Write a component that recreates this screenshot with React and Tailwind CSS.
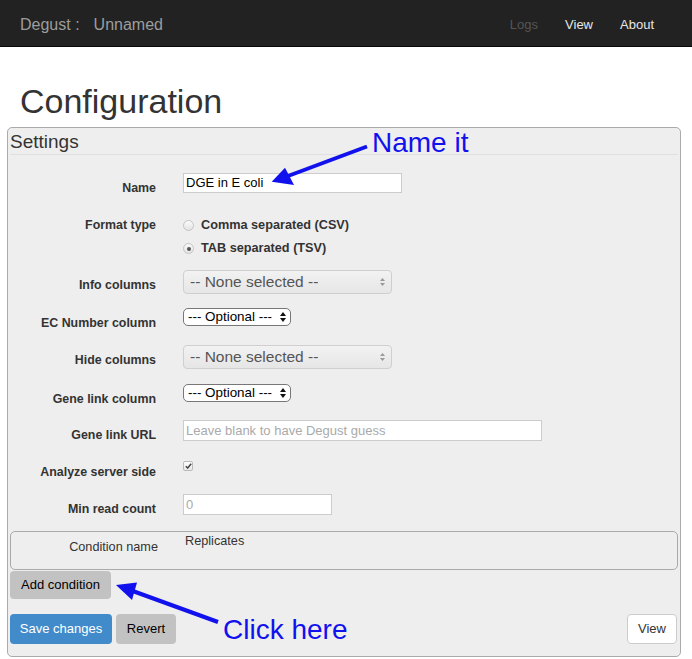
const BLUE = "#1111ee";

const Label = ({ children, pt = "pt-[8px]" }) => (
  <div className={`w-[146px] shrink-0 text-right text-[12.4px] font-bold leading-[15px] text-[#333] ${pt}`}>
    {children}
  </div>
);

const Row = ({ label, h, children, labelPt }) => (
  <div className={`flex items-start ${h}`}>
    <Label pt={labelPt}>{label}</Label>
    <div className="ml-[27px]">{children}</div>
  </div>
);

const WideSelect = () => (
  <div className="flex h-[24px] w-[209px] items-center justify-between rounded-[4px] border border-[#cfcfcf] bg-gradient-to-b from-[#f2f2f2] to-[#e6e6e6] pl-[6px] pr-[6px]">
    <span className="text-[15.5px] leading-none text-[#555]">-- None selected --</span>
    <svg width="5" height="8" viewBox="0 0 5 8">
      <path d="M2.5 0L5 3H0z M2.5 8L0 5h5z" fill="#999" />
    </svg>
  </div>
);

const SmallSelect = () => (
  <div className="flex h-[18px] w-[108px] items-center justify-between rounded-[5px] border border-[#777] bg-white pl-[4px] pr-[4px]">
    <span className="text-[13.4px] leading-none text-black">--- Optional ---</span>
    <svg width="6" height="10" viewBox="0 0 6 10">
      <path d="M3 0L6 4H0z M3 10L0 6h6z" fill="#111" />
    </svg>
  </div>
);

const Radio = ({ checked }) => (
  <span className="flex h-[11px] w-[11px] items-center justify-center rounded-full border border-[#c4c4c4] bg-gradient-to-b from-[#fafafa] to-[#e4e4e4]">
    {checked && <span className="h-[4px] w-[4px] rounded-full bg-[#555]" />}
  </span>
);

const Btn = ({ className, children }) => (
  <button className={`flex items-center justify-center rounded-[4px] text-[13px] ${className}`}>
    {children}
  </button>
);

export default function App() {
  return (
    <div className="relative h-[659px] w-[692px] overflow-hidden bg-white font-['Liberation_Sans',Arial,sans-serif]">
      {/* Navbar */}
      <div className="flex h-[47px] items-center border-b border-[#080808] bg-[#222] pl-[20px] pr-[38px] pt-[3px]">
        <span className="text-[16px] text-[#9d9d9d]">Degust :</span>
        <span className="ml-[14px] text-[16px] text-[#9d9d9d]">Unnamed</span>
        <div className="ml-auto flex gap-[27px] text-[13px]">
          <span className="text-[#555]">Logs</span>
          <span className="text-[#e6e6e6]">View</span>
          <span className="text-[#e6e6e6]">About</span>
        </div>
      </div>

      <h1 className="ml-[20px] mt-[34px] mb-[6px] text-[34px] font-medium leading-[40px] text-[#333]">
        Configuration
      </h1>

      {/* Settings panel */}
      <div className="ml-[7px] w-[674px] rounded-[5px] border border-[#aaa] bg-[#eee] px-[2px] pb-[12px]">
        <div className="h-[27px] border-b border-[#e0e0e0] pt-[1px] text-[19px] leading-[26px] text-[#333]">
          Settings
        </div>

        <div className="mt-[18px]">
          <Row label="Name" h="h-[37px]">
            <div className="flex h-[20px] w-[219px] items-center border border-[#ccc] bg-white px-[2px] text-[13px] text-black">
              DGE in E coli
            </div>
          </Row>

          <Row label="Format type" h="h-[60px]">
            <div className="pt-[4px] text-[12.7px] font-bold text-[#333]">
              <div className="flex h-[23px] items-center">
                <Radio />
                <span className="ml-[7px]">Comma separated (CSV)</span>
              </div>
              <div className="flex h-[23px] items-center">
                <Radio checked />
                <span className="ml-[7px]">TAB separated (TSV)</span>
              </div>
            </div>
          </Row>

          <Row label="Info columns" h="h-[38px]">
            <WideSelect />
          </Row>

          <Row label="EC Number column" h="h-[37px]">
            <SmallSelect />
          </Row>

          <Row label="Hide columns" h="h-[39px]">
            <WideSelect />
          </Row>

          <Row label="Gene link column" h="h-[36px]">
            <SmallSelect />
          </Row>

          <Row label="Gene link URL" h="h-[37px]">
            <div className="flex h-[21px] w-[359px] items-center border border-[#ccc] bg-white px-[2px] text-[13px] text-[#aaa]">
              Leave blank to have Degust guess
            </div>
          </Row>

          <Row label="Analyze server side" h="h-[37px]" labelPt="pt-[8px]">
            <div className="mt-[4px] flex h-[10px] w-[10px] items-center justify-center rounded-[2px] border border-[#bbb] bg-gradient-to-b from-white to-[#e8e8e8]">
              <svg width="7" height="6" viewBox="0 0 7 6">
                <path d="M0.8 3.2L2.7 5L6.2 0.8" fill="none" stroke="#444" strokeWidth="1.5" />
              </svg>
            </div>
          </Row>

          <Row label="Min read count" h="h-[37px]">
            <div className="flex h-[21px] w-[149px] items-center border border-[#ccc] bg-white px-[2px] text-[13px] text-[#aaa]">
              0
            </div>
          </Row>
        </div>

        {/* Conditions */}
        <div className="flex h-[39px] items-start rounded-[5px] border border-[#aaa] text-[12.7px] leading-[15px] text-[#333]">
          <div className="w-[147px] pt-[8px] text-right">Condition name</div>
          <div className="ml-[27px] pt-[2px]">Replicates</div>
        </div>
        <Btn className="mt-[1px] h-[28px] w-[101px] bg-[#c2c2c2] text-black">Add condition</Btn>

        <div className="mt-[15px] flex items-center">
          <Btn className="h-[30px] w-[102px] bg-[#428bca] text-white">Save changes</Btn>
          <Btn className="ml-[4px] h-[30px] w-[60px] bg-[#c2c2c2] text-black">Revert</Btn>
          <Btn className="ml-auto mr-[1px] h-[30px] w-[50px] border border-[#ccc] bg-white text-[#333]">View</Btn>
        </div>
      </div>

      {/* Annotations */}
      <svg className="pointer-events-none absolute left-0 top-0" width="692" height="659">
        <line x1="367" y1="146.5" x2="284" y2="177.5" stroke={BLUE} strokeWidth="4" />
        <polygon points="271.7,181.7 285,167.7 294,185" fill={BLUE} />
        <line x1="218" y1="622" x2="130" y2="590" stroke={BLUE} strokeWidth="4" />
        <polygon points="116,585 137,582.5 132,600" fill={BLUE} />
      </svg>
      <span className="absolute left-[372px] top-[129px] text-[28px] leading-[28px]" style={{ color: BLUE }}>
        Name it
      </span>
      <span className="absolute left-[223px] top-[616px] text-[28px] leading-[28px]" style={{ color: BLUE }}>
        Click here
      </span>
    </div>
  );
}
